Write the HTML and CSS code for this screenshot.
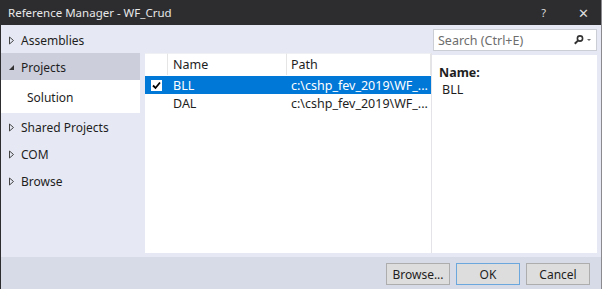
FILE: index.html
```html
<!DOCTYPE html>
<html>
<head>
<meta charset="utf-8">
<link rel="stylesheet" href="styles.css">
</head>
<body>
<div class="window">
  <div class="titlebar">
    <span class="title">Reference Manager - WF_Crud</span>
    <span class="tb-btns"><span class="help">?</span><span class="close">✕</span></span>
  </div>
  <div class="main">
    <nav class="nav">
      <div class="nav-item"><svg class="arr" width="7" height="9" viewBox="0 0 7 9"><path d="M1.5 1 L5.5 4.5 L1.5 8 Z" fill="none" stroke="#444" stroke-width="1"/></svg>Assemblies</div>
      <div class="nav-item sel"><svg class="arr" width="7" height="9" viewBox="0 0 7 9"><path d="M6 2 L6 7 L1 7 Z" fill="#333"/></svg>Projects</div>
      <div class="nav-sub">Solution</div>
      <div class="nav-item"><svg class="arr" width="7" height="9" viewBox="0 0 7 9"><path d="M1.5 1 L5.5 4.5 L1.5 8 Z" fill="none" stroke="#444" stroke-width="1"/></svg>Shared Projects</div>
      <div class="nav-item"><svg class="arr" width="7" height="9" viewBox="0 0 7 9"><path d="M1.5 1 L5.5 4.5 L1.5 8 Z" fill="none" stroke="#444" stroke-width="1"/></svg>COM</div>
      <div class="nav-item"><svg class="arr" width="7" height="9" viewBox="0 0 7 9"><path d="M1.5 1 L5.5 4.5 L1.5 8 Z" fill="none" stroke="#444" stroke-width="1"/></svg>Browse</div>
    </nav>
    <section class="content">
      <div class="searchrow">
        <div class="search">
          <span class="ph">Search (Ctrl+E)</span>
          <svg width="20" height="10" viewBox="0 0 20 10"><circle cx="7" cy="3.5" r="2.6" fill="none" stroke="#333" stroke-width="1.6"/><path d="M5.2 5.4 L1.8 8.8" stroke="#333" stroke-width="2"/><path d="M14 4 L18 4 L16 6 Z" fill="#666"/></svg>
        </div>
      </div>
      <div class="panes">
        <div class="list">
          <div class="row head">
            <div class="c-chk"></div>
            <div class="c-name">Name</div>
            <div class="c-path">Path</div>
          </div>
          <div class="row selrow">
            <div class="c-chk"><span class="chk"><svg width="9" height="9" viewBox="0 0 9 9"><path d="M1 4.5 L3.5 7 L8 1.5" fill="none" stroke="#000" stroke-width="1.8"/></svg></span></div>
            <div class="c-name">BLL</div>
            <div class="c-path">c:\cshp_fev_2019\WF_...</div>
          </div>
          <div class="row">
            <div class="c-chk"></div>
            <div class="c-name">DAL</div>
            <div class="c-path">c:\cshp_fev_2019\WF_...</div>
          </div>
        </div>
        <div class="details">
          <div class="d-label">Name:</div>
          <div class="d-value">BLL</div>
        </div>
      </div>
    </section>
  </div>
  <div class="footer">
    <button class="btn">Browse...</button>
    <button class="btn ok">OK</button>
    <button class="btn">Cancel</button>
  </div>
</div>
</body>
</html>
```
FILE: styles.css
```css
* { box-sizing: border-box; }
html, body { margin: 0; padding: 0; }
body {
  width: 602px; height: 289px; overflow: hidden;
  font-family: "Noto Sans", "Open Sans", sans-serif;
  font-size: 12px; color: #1e1e1e;
}
.window {
  width: 602px; height: 289px;
  border-left: 1px solid #2d2d30;
  border-right: 1px solid #8a8a8f;
  display: flex; flex-direction: column;
  background: #e6e9f3;
}
.titlebar {
  height: 25px; background: #2d2d30; color: #e8e8e8;
  display: flex; align-items: center; justify-content: space-between;
  padding-left: 7px; font-size: 11.5px; flex: none;
}
.tb-btns { display: flex; align-items: center; }
.help { font-size: 11px; margin-right: 32px; color: #ddd; }
.close { font-size: 13px; margin-right: 12px; color: #ddd; }
.main { flex: 1; display: flex; min-height: 0; }
.nav { width: 139px; padding-top: 1px; flex: none; }
.nav-item {
  height: 27px; display: flex; align-items: center; padding-left: 7px; padding-top: 2px;
  font-size: 12px; color: #1e1e1e;
}
.nav-item .arr { margin-right: 6px; }
.nav-item.sel { background: #cccedb; }
.nav-sub {
  height: 33px; display: flex; align-items: center; padding-left: 26px; padding-top: 1px;
  background: #fff; font-size: 12px;
}
.content { flex: 1; margin-left: 5px; margin-right: 4px; display: flex; flex-direction: column; }
.searchrow { height: 28px; display: flex; justify-content: flex-end; align-items: flex-start; padding-top: 4px; }
.search {
  width: 164px; height: 22px; background: #fff; border: 1px solid #ccced6;
  display: flex; align-items: center; justify-content: space-between;
  padding-left: 4px; padding-right: 3px;
}
.ph { color: #6d6d6d; font-size: 12.5px; }
.panes { display: flex; height: 200px; }
.list { width: 287px; background: #fff; flex: none; border-right: 1px solid #e3e3e8; }
.row { display: flex; height: 18px; align-items: center; }
.row.head { height: 23px; border-bottom: 1px solid #fff; }
.row.head > div { height: 100%; display: flex; align-items: center; border-right: 1px solid #e5e5e5; border-top: 1px solid #eef0f4; }
.c-chk { width: 23px; flex: none; display: flex; align-items: center; justify-content: center; }
.c-name { width: 119px; padding-left: 5px; flex: none; font-size: 12.5px; }
.c-path { flex: 1; padding-left: 4px; font-size: 12.5px; white-space: nowrap; overflow: hidden; }
.selrow { background: #0078d7; color: #fff; }
.chk { width: 11px; height: 11px; background: #fff; display: flex; align-items: center; justify-content: center; }
.details { flex: 1; background: #fff; margin-top: 2px; padding: 10px 0 0 7px; }
.d-label { font-weight: bold; font-size: 12.5px; line-height: 16px; }
.d-value { padding-left: 3px; font-size: 12.5px; line-height: 17px; }
.footer {
  height: 32px; flex: none; background: #d6dbe7;
  display: flex; justify-content: flex-end; align-items: flex-start;
  padding-top: 6px; padding-right: 11px; gap: 6px;
  margin-top: 4px;
}
.btn {
  width: 64px; height: 22px; background: #dddddd; border: 1px solid #adadad;
  font-family: "Noto Sans", "Open Sans", sans-serif; font-size: 12px; color: #1e1e1e;
  padding: 0; margin: 0;
}
.btn.ok { border-color: #6ba6dd; }
```
